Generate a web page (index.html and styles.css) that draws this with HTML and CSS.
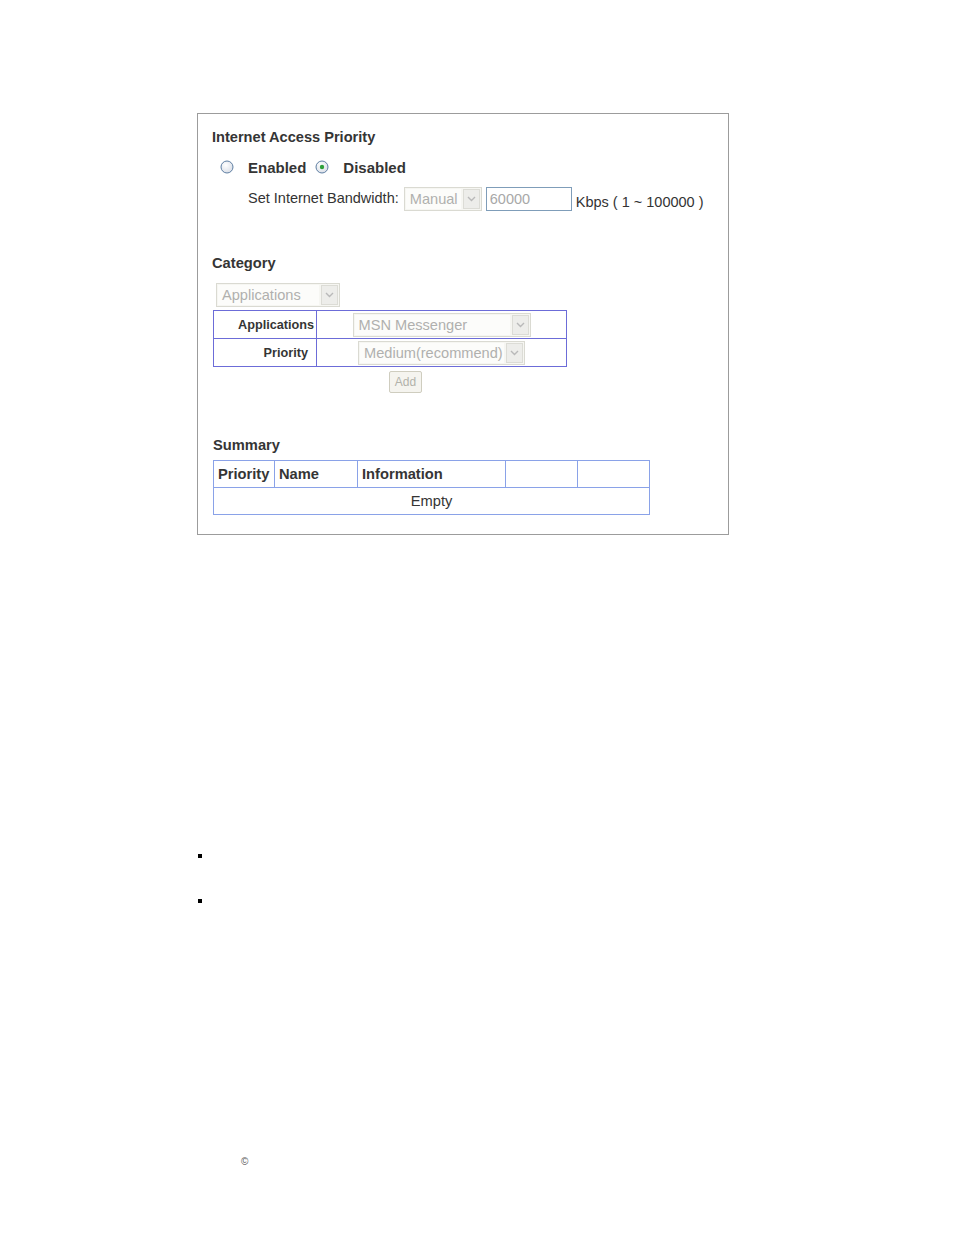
FILE: index.html
```html
<!DOCTYPE html>
<html>
<head>
<meta charset="utf-8">
<link rel="stylesheet" href="styles.css">
</head>
<body>
<div class="panel">
  <div class="title">Internet Access Priority</div>
  <div class="radio-row">
    <span class="radio"><svg width="14" height="14" viewBox="0 0 14 14"><defs><radialGradient id="g1" cx="0.4" cy="0.35" r="0.7"><stop offset="0" stop-color="#ffffff"/><stop offset="1" stop-color="#d8dde6"/></radialGradient></defs><circle cx="7" cy="7" r="6" fill="url(#g1)" stroke="#5f7fa3" stroke-width="1"/></svg></span>
    <span class="radio-label">Enabled</span>
    <span class="radio radio-2"><svg width="14" height="14" viewBox="0 0 14 14"><defs><radialGradient id="g2" cx="0.4" cy="0.35" r="0.7"><stop offset="0" stop-color="#ffffff"/><stop offset="1" stop-color="#d8dde6"/></radialGradient></defs><circle cx="7" cy="7" r="6" fill="url(#g2)" stroke="#5f7fa3" stroke-width="1"/><circle cx="7" cy="7" r="2.2" fill="#2fa03a"/></svg></span>
    <span class="radio-label">Disabled</span>
  </div>
  <div class="bw-row">
    <span class="bw-label">Set Internet Bandwidth:</span>
    <span class="sel sel-manual"><span class="sel-text">Manual</span><span class="sel-arrow"><svg width="9" height="6" viewBox="0 0 9 6"><path d="M1 1 L4.5 4.5 L8 1" fill="none" stroke="#b9b9b9" stroke-width="1.4"/></svg></span></span>
    <span class="txt-input">60000</span>
    <span class="kbps">Kbps ( 1 ~ 100000 )</span>
  </div>

  <div class="heading cat-heading">Category</div>
  <div class="cat-sel-wrap">
    <span class="sel sel-apps"><span class="sel-text">Applications</span><span class="sel-arrow"><svg width="9" height="6" viewBox="0 0 9 6"><path d="M1 1 L4.5 4.5 L8 1" fill="none" stroke="#b9b9b9" stroke-width="1.4"/></svg></span></span>
  </div>
  <table class="cat-table">
    <colgroup><col class="c-label"><col class="c-ctrl"></colgroup>
    <tr>
      <td class="lbl">Applications</td>
      <td class="ctrl"><span class="sel sel-msn"><span class="sel-text">MSN Messenger</span><span class="sel-arrow"><svg width="9" height="6" viewBox="0 0 9 6"><path d="M1 1 L4.5 4.5 L8 1" fill="none" stroke="#b9b9b9" stroke-width="1.4"/></svg></span></span></td>
    </tr>
    <tr>
      <td class="lbl">Priority</td>
      <td class="ctrl"><span class="sel sel-med"><span class="sel-text">Medium(recommend)</span><span class="sel-arrow"><svg width="9" height="6" viewBox="0 0 9 6"><path d="M1 1 L4.5 4.5 L8 1" fill="none" stroke="#b9b9b9" stroke-width="1.4"/></svg></span></span></td>
    </tr>
  </table>
  <div class="add-wrap"><span class="add-btn">Add</span></div>

  <div class="heading sum-heading">Summary</div>
  <table class="sum-table">
    <colgroup><col class="s1"><col class="s2"><col class="s3"><col class="s4"><col class="s5"></colgroup>
    <tr class="sum-head">
      <th>Priority</th><th>Name</th><th>Information</th><th></th><th></th>
    </tr>
    <tr class="sum-body">
      <td colspan="5">Empty</td>
    </tr>
  </table>
</div>

<ul class="bullets">
  <li class="bullet"><span class="sq"></span></li>
  <li class="bullet"><span class="sq"></span></li>
</ul>

<div class="copy">&copy;</div>
</body>
</html>
```
FILE: styles.css
```css
html, body {
  margin: 0;
  padding: 0;
  background: #ffffff;
}
body {
  font-family: "Liberation Sans", Arial, sans-serif;
  color: #333333;
  width: 954px;
  height: 1235px;
  overflow: hidden;
}
.panel {
  box-sizing: border-box;
  margin: 113px 0 0 197px;
  width: 532px;
  height: 422px;
  border: 1px solid #9c9c9c;
  padding: 13px 0 0 14px;
}
.title {
  font-weight: bold;
  font-size: 14.6px;
  line-height: 20px;
  height: 20px;
  color: #353535;
}
.radio-row {
  display: flex;
  align-items: center;
  height: 22px;
  margin-top: 9px;
  padding-left: 8px;
}
.radio {
  display: inline-flex;
  width: 14px;
  height: 14px;
}
.radio-label {
  font-weight: bold;
  font-size: 15px;
  margin-left: 14px;
  color: #353535;
}
.radio-2 {
  margin-left: 9px;
}
.bw-row {
  display: flex;
  align-items: center;
  height: 24px;
  margin-top: 9px;
  padding-left: 36px;
  font-size: 14.5px;
}
.bw-label {
  margin-right: 5px;
  margin-top: -2px;
}
.sel {
  box-sizing: border-box;
  display: inline-flex;
  height: 24px;
  border: 1px solid #dadad2;
  background: #f6f6f2;
  padding: 1px;
}
.sel-text {
  flex: 1;
  color: #b0b0ae;
  font-size: 14.6px;
  line-height: 20px;
  padding-left: 4px;
  background: #fcfcfa;
  white-space: nowrap;
  overflow: hidden;
  text-align: left;
}
.sel-arrow {
  box-sizing: border-box;
  width: 17px;
  margin-left: 2px;
  border: 1px solid #dcdcd6;
  background: #ededea;
  display: flex;
  align-items: center;
  justify-content: center;
}
.sel-manual {
  width: 78px;
}
.txt-input {
  box-sizing: border-box;
  display: inline-block;
  width: 86px;
  height: 24px;
  margin-left: 4px;
  border: 1px solid #7f9db9;
  color: #a8a8a8;
  font-size: 14.5px;
  line-height: 22px;
  padding-left: 3px;
}
.kbps {
  margin-left: 4px;
  margin-top: 5px;
}
.heading {
  font-weight: bold;
  font-size: 14.7px;
  line-height: 20px;
  height: 20px;
  color: #353535;
}
.cat-heading {
  margin-top: 42px;
}
.cat-sel-wrap {
  margin-top: 10px;
  padding-left: 4px;
  height: 24px;
}
.sel-apps {
  width: 124px;
}
.cat-table {
  margin-top: 3px;
  margin-left: 1px;
  border-collapse: collapse;
  table-layout: fixed;
  width: 354px;
}
.c-label {
  width: 103px;
}
.cat-table td {
  border: 1px solid #6c6cd8;
  height: 27px;
  padding: 0;
  vertical-align: middle;
}
.cat-table .lbl {
  font-weight: bold;
  font-size: 12.7px;
  padding: 0 8px 0 24px;
  text-align: right;
  white-space: nowrap;
  overflow: visible;
  color: #353535;
}
.cat-table .ctrl {
  text-align: center;
}
.ctrl .sel {
  vertical-align: middle;
}
.sel-msn {
  width: 178px;
}
.sel-med {
  width: 167px;
}
.add-wrap {
  margin-top: 4px;
  padding-left: 177px;
  height: 22px;
}
.add-btn {
  box-sizing: border-box;
  display: inline-block;
  width: 33px;
  height: 22px;
  border: 1px solid #cfcdbf;
  border-radius: 2px;
  background: #f5f4ef;
  color: #b2b2aa;
  font-size: 12px;
  line-height: 20px;
  text-align: center;
}
.sum-heading {
  margin-top: 42px;
  margin-left: 1px;
}
.sum-table {
  margin-top: 5px;
  margin-left: 1px;
  border-collapse: collapse;
  table-layout: fixed;
  width: 436px;
}
.s1 { width: 61px; }
.s2 { width: 83px; }
.s3 { width: 148px; }
.s4 { width: 72px; }
.s5 { width: 72px; }
.sum-table th,
.sum-table td {
  border: 1px solid #8aa2e8;
  padding: 0 0 0 4px;
  font-size: 14.7px;
  color: #353535;
}
.sum-head th {
  height: 26px;
  font-weight: bold;
  text-align: left;
  white-space: nowrap;
}
.sum-body td {
  height: 26px;
  text-align: center;
  padding: 0;
  font-weight: normal;
}
.bullets {
  list-style: none;
  margin: 319px 0 0 198px;
  padding: 0;
}
.bullet {
  height: 45px;
}
.sq {
  display: block;
  width: 4px;
  height: 4px;
  background: #000000;
}
.copy {
  margin: 212px 0 0 241px;
  font-size: 10px;
  line-height: 12px;
  color: #555555;
}
```
